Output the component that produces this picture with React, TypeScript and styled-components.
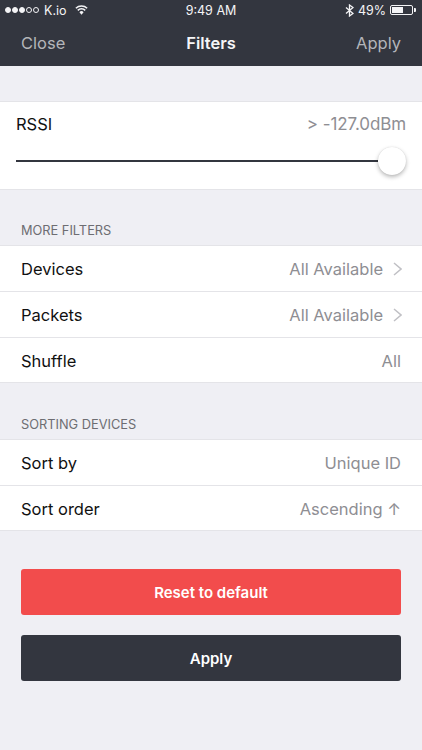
import React from "react";
import styled, { createGlobalStyle } from "styled-components";

const GlobalStyle = createGlobalStyle`
  html, body {
    margin: 0;
    padding: 0;
    background: #efeff4;
    font-family: Inter, "Liberation Sans", sans-serif;
  }
`;

const Page = styled.div`
  width: 422px;
  height: 750px;
  overflow: hidden;
  background: #efeff4;
  display: flex;
  flex-direction: column;
`;

const Header = styled.header`
  height: 66px;
  flex-shrink: 0;
  background: #33363f;
  color: #fff;
`;

const StatusBar = styled.div`
  height: 20px;
  display: grid;
  grid-template-columns: 1fr auto 1fr;
  align-items: center;
  padding: 0 5px;
  font-size: 12.5px;
  color: #f4f4f6;
`;

const StatusLeft = styled.div`
  display: flex;
  align-items: center;
  gap: 4px;
`;

const StatusRight = styled.div`
  display: flex;
  align-items: center;
  justify-content: flex-end;
  gap: 4px;
`;

const Signal = styled.div`
  display: flex;
  gap: 1px;
  margin-right: 1px;
`;

const Dot = styled.span<{ $on?: boolean }>`
  width: 6px;
  height: 6px;
  box-sizing: border-box;
  border-radius: 50%;
  border: 0.75px solid #f4f4f6;
  background: ${(p) => (p.$on ? "#f4f4f6" : "transparent")};
`;

const WifiIcon = styled.svg`
  width: 13px;
  height: 10px;
  margin-left: 4px;
`;

const Battery = styled.div`
  width: 23px;
  height: 10px;
  margin-right: 4px;
  padding: 1px;
  box-sizing: border-box;
  border: 1px solid #f4f4f6;
  border-radius: 2px;
  position: relative;

  &::after {
    content: "";
    position: absolute;
    right: -3.5px;
    top: 2px;
    width: 1.5px;
    height: 4px;
    background: #f4f4f6;
    border-radius: 0 1px 1px 0;
  }
`;

const BatteryFill = styled.div`
  width: 60%;
  height: 100%;
  background: #f4f4f6;
`;

const NavBar = styled.div`
  height: 46px;
  display: grid;
  grid-template-columns: 1fr auto 1fr;
  align-items: center;
  padding: 0 21px;
  font-size: 16.5px;
`;

const NavAction = styled.span<{ $end?: boolean }>`
  color: #b4b5ba;
  text-align: ${(p) => (p.$end ? "right" : "left")};
`;

const NavTitle = styled.span`
  font-weight: 600;
  font-size: 16.5px;
  color: #f6f6f7;
`;

const SliderCard = styled.section`
  margin-top: 35px;
  height: 89px;
  box-sizing: border-box;
  padding: 11px 16px 0;
  background: #fff;
  border-top: 1px solid #e4e4e8;
  border-bottom: 1px solid #e4e4e8;
`;

const SliderHead = styled.div`
  display: flex;
  justify-content: space-between;
  align-items: center;
  height: 22px;
  font-size: 16.5px;
  color: #111;
`;

const SliderValue = styled.span`
  color: #8e8e93;
  font-size: 17px;
  letter-spacing: -0.1px;
`;

const SliderTrack = styled.div`
  margin-top: 12px;
  height: 28px;
  display: flex;
  align-items: center;
`;

const SliderLine = styled.div`
  flex: 1;
  height: 2px;
  background: #33363f;
`;

const SliderThumb = styled.div`
  width: 28px;
  height: 28px;
  border-radius: 50%;
  background: #fff;
  box-shadow: 0 2px 4px rgba(0, 0, 0, 0.28), 0 0 1px rgba(0, 0, 0, 0.15);
`;

const SectionLabel = styled.div<{ $top: number }>`
  margin-top: ${(p) => p.$top}px;
  height: 16px;
  line-height: 16px;
  margin-bottom: 6px;
  padding-left: 21px;
  font-size: 12.8px;
  color: #6d6d72;
`;

const Group = styled.section`
  background: #fff;
  border-top: 1px solid #e4e4e8;
  border-bottom: 1px solid #e4e4e8;
`;

const Row = styled.div`
  height: 45px;
  display: flex;
  align-items: center;
  justify-content: space-between;
  padding: 0 21px;
  font-size: 16.5px;
  color: #111;

  & + & {
    border-top: 1px solid #e4e4e8;
  }

  &:last-child {
    height: 43px;
    padding-top: 1px;
  }
`;

const RowValue = styled.span`
  display: flex;
  align-items: center;
  gap: 10px;
  color: #8e8e93;
`;

const Chevron = styled.svg`
  width: 9px;
  height: 14px;
  margin-right: -1px;
  fill: none;
  stroke: #c0c0c5;
  stroke-width: 1.5;
`;

const Actions = styled.div`
  margin-top: 38px;
  padding: 0 21px;
  display: flex;
  flex-direction: column;
  gap: 20px;
`;

const ActionButton = styled.button<{ $bg: string }>`
  height: 46px;
  border: 0;
  border-radius: 3px;
  background: ${(p) => p.$bg};
  color: #fff;
  font-family: inherit;
  font-size: 15px;
  font-weight: 600;
`;

const ChevronIcon = () => (
  <Chevron viewBox="0 0 9 14">
    <path d="M1 1 L8 7 L1 13" />
  </Chevron>
);

const App: React.FC = () => {
  return (
    <Page>
      <GlobalStyle />
      <Header>
        <StatusBar>
          <StatusLeft>
            <Signal>
              <Dot $on />
              <Dot $on />
              <Dot $on />
              <Dot />
              <Dot />
            </Signal>
            <span>K.io</span>
            <WifiIcon viewBox="0 0 14 11">
              <path d="M0.8 3.6 A9 9 0 0 1 13.2 3.6" fill="none" stroke="#f4f4f6" strokeWidth="1.7" />
              <path d="M2.9 5.9 A6 6 0 0 1 11.1 5.9" fill="none" stroke="#f4f4f6" strokeWidth="1.7" />
              <path d="M4.7 7.9 A3.2 3.2 0 0 1 9.3 7.9 L7 10.6 Z" fill="#f4f4f6" />
            </WifiIcon>
          </StatusLeft>
          <span>9:49 AM</span>
          <StatusRight>
            <svg width="9" height="13" viewBox="0 0 9 13" fill="none" stroke="#f4f4f6" strokeWidth="1.3">
              <path d="M1 3.5 L8 9.5 L4.5 12 L4.5 1 L8 3.5 L1 9.5" />
            </svg>
            <span>49%</span>
            <Battery>
              <BatteryFill />
            </Battery>
          </StatusRight>
        </StatusBar>
        <NavBar>
          <NavAction>Close</NavAction>
          <NavTitle>Filters</NavTitle>
          <NavAction $end>Apply</NavAction>
        </NavBar>
      </Header>

      <SliderCard>
        <SliderHead>
          <span>RSSI</span>
          <SliderValue>&gt; -127.0dBm</SliderValue>
        </SliderHead>
        <SliderTrack>
          <SliderLine />
          <SliderThumb />
        </SliderTrack>
      </SliderCard>

      <SectionLabel $top={33}>MORE FILTERS</SectionLabel>
      <Group>
        <Row>
          <span>Devices</span>
          <RowValue>
            All Available
            <ChevronIcon />
          </RowValue>
        </Row>
        <Row>
          <span>Packets</span>
          <RowValue>
            All Available
            <ChevronIcon />
          </RowValue>
        </Row>
        <Row>
          <span>Shuffle</span>
          <RowValue>All</RowValue>
        </Row>
      </Group>

      <SectionLabel $top={34}>SORTING DEVICES</SectionLabel>
      <Group>
        <Row>
          <span>Sort by</span>
          <RowValue>Unique ID</RowValue>
        </Row>
        <Row>
          <span>Sort order</span>
          <RowValue>Ascending ↑</RowValue>
        </Row>
      </Group>

      <Actions>
        <ActionButton $bg="#f24c4c">Reset to default</ActionButton>
        <ActionButton $bg="#33363f">Apply</ActionButton>
      </Actions>
    </Page>
  );
};

export default App;
